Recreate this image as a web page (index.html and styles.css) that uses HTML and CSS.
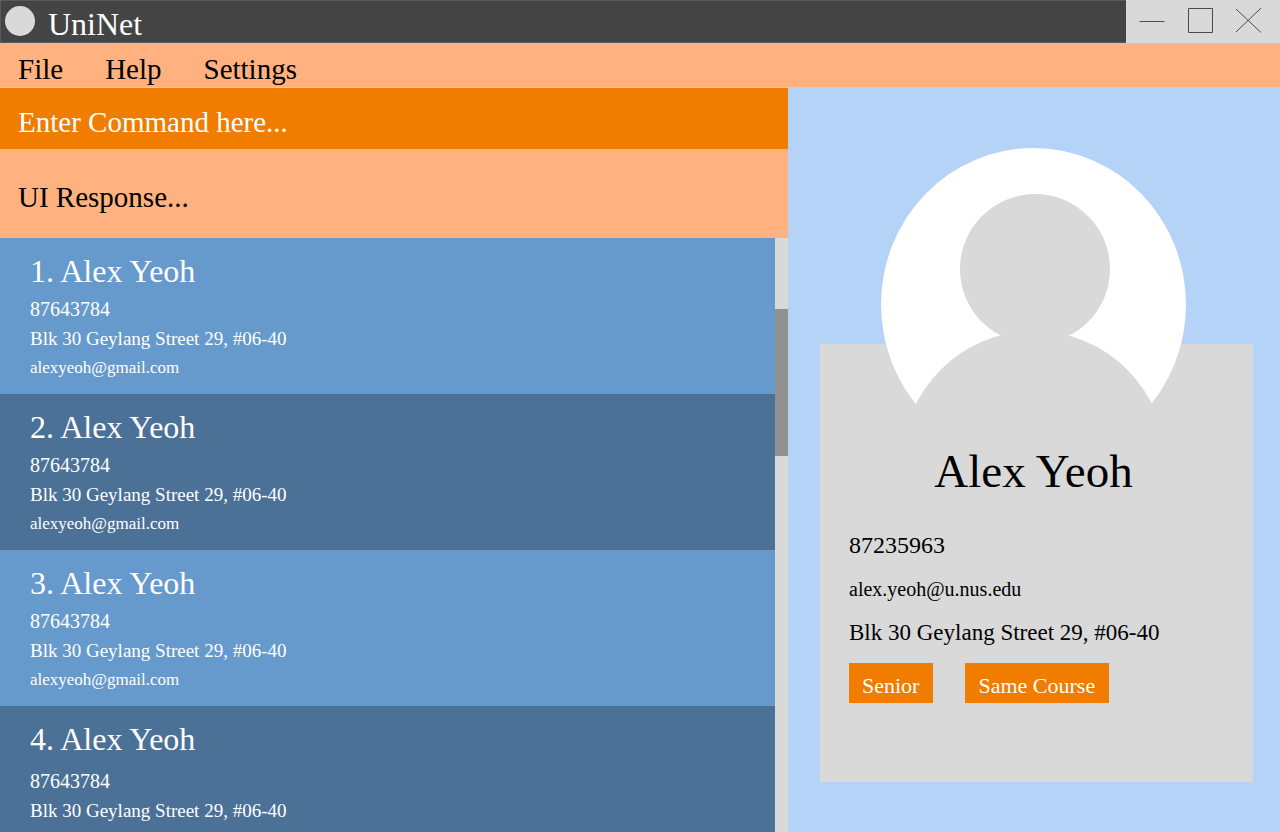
FILE: index.html
```
<!DOCTYPE html>
<html lang="en">
<head>
<meta charset="utf-8">
<meta name="viewport" content="width=device-width, initial-scale=1">
<title>UniNet</title>
<link rel="stylesheet" href="styles.css">
</head>
<body>
<div class="app">
  <header class="titlebar">
    <span class="logo"></span>
    <h1 class="app-name">UniNet</h1>
    <div class="window-controls">
      <button type="button" class="window-button" aria-label="Minimize">
        <svg width="28" height="28" viewBox="0 0 28 28"><path d="M1.500 14.500h25"/></svg>
      </button>
      <button type="button" class="window-button" aria-label="Maximize">
        <svg width="28" height="28" viewBox="0 0 28 28"><path d="M2.500 1.500h24v24h-24z"/></svg>
      </button>
      <button type="button" class="window-button" aria-label="Close">
        <svg width="28" height="28" viewBox="0 0 28 28"><path d="M2 2l25 23.500M27 1L2 25"/></svg>
      </button>
    </div>
  </header>

  <nav class="menubar">
    <button type="button" class="menu-item">File</button>
    <button type="button" class="menu-item">Help</button>
    <button type="button" class="menu-item">Settings</button>
  </nav>

  <main class="content">
    <section class="left">
      <input class="command" type="text" aria-label="Command" placeholder="Enter Command here...">
      <p class="response">UI Response...</p>
      <div class="list-area">
        <ul class="people">
          <li class="person">
            <h2 class="person-name">1. Alex Yeoh</h2>
            <p class="phone">87643784</p>
            <p class="address">Blk 30 Geylang Street 29, #06-40</p>
            <p class="email">alexyeoh@gmail.com</p>
          </li>
          <li class="person">
            <h2 class="person-name">2. Alex Yeoh</h2>
            <p class="phone">87643784</p>
            <p class="address">Blk 30 Geylang Street 29, #06-40</p>
            <p class="email">alexyeoh@gmail.com</p>
          </li>
          <li class="person">
            <h2 class="person-name">3. Alex Yeoh</h2>
            <p class="phone">87643784</p>
            <p class="address">Blk 30 Geylang Street 29, #06-40</p>
            <p class="email">alexyeoh@gmail.com</p>
          </li>
          <li class="person person-last">
            <h2 class="person-name">4. Alex Yeoh</h2>
            <p class="phone">87643784</p>
            <p class="address">Blk 30 Geylang Street 29, #06-40</p>
          </li>
        </ul>
        <div class="scrollbar"><div class="thumb"></div></div>
      </div>
    </section>

    <section class="profile">
      <svg class="avatar" width="305" height="313" viewBox="0 0 305 313" role="img" aria-label="Profile picture">
        <ellipse cx="152.500" cy="156.500" rx="152.500" ry="156.500" fill="#fff"/>
        <circle cx="154" cy="121" r="75" fill="#d9d9d9"/>
        <circle cx="153" cy="315" r="132" fill="#d9d9d9"/>
      </svg>
      <article class="card">
        <h2 class="card-name">Alex Yeoh</h2>
        <p class="card-phone">87235963</p>
        <p class="card-email">alex.yeoh@u.nus.edu</p>
        <p class="card-address">Blk 30 Geylang Street 29, #06-40</p>
        <div class="tags">
          <span class="tag">Senior</span>
          <span class="tag">Same Course</span>
        </div>
      </article>
    </section>
  </main>
</div>
</body>
</html>
```
FILE: styles.css
```
* {
  box-sizing: border-box;
  margin: 0;
  padding: 0;
}

body {
  font-family: "Liberation Serif", "Times New Roman", serif;
  color: #000;
}

h1, h2 {
  font-weight: 400;
}

button, input {
  font: inherit;
  color: inherit;
  border: 0;
  background: none;
}

.app {
  display: flex;
  flex-direction: column;
  height: 100vh;
  overflow: hidden;
}

.titlebar {
  display: flex;
  align-items: center;
  height: 43px;
  padding: 0 0 2px 4px;
  background: #444;
  border: 1px solid #5a5a5a;
  border-right: 0;
  color: #fff;
}

.logo {
  width: 30px;
  height: 30px;
  border-radius: 50%;
  background: #d9d9d9;
}

.app-name {
  margin-left: 13px;
  padding-top: 6px;
  font-size: 32px;
  line-height: 36px;
}

.window-controls {
  display: flex;
  align-items: center;
  gap: 20px;
  height: 43px;
  margin: 0 0 -2px auto;
  padding: 0 18px 2px 12px;
  background: #d9d9d9;
}

.window-button {
  display: flex;
}

.window-button svg {
  fill: none;
  stroke: #4a4a4a;
}

.menubar {
  display: flex;
  gap: 42px;
  height: 45px;
  padding: 7px 18px 0;
  background: #ffb280;
  border-bottom: 1px solid #ffc39c;
}

.menu-item {
  font-size: 29px;
  line-height: 38px;
}

.content {
  flex: 1;
  min-height: 0;
  display: grid;
  grid-template-columns: 788fr 492fr;
}

.left {
  display: flex;
  flex-direction: column;
  min-width: 0;
  min-height: 0;
}

.command {
  width: 100%;
  height: 61px;
  padding: 7px 18px 0;
  background: #f07c00;
  color: #fff;
  font-size: 29px;
}

.command::placeholder {
  color: #fff;
  opacity: 1;
}

.response {
  padding: 28px 18px 21px;
  background: #ffb280;
  font-size: 29px;
  line-height: 40px;
}

.list-area {
  flex: 1;
  min-height: 0;
  display: flex;
}

.people {
  flex: 1;
  overflow: hidden;
  list-style: none;
}

.person {
  height: 156px;
  padding: 14px 30px 0;
  background: #6699cc;
  color: #fff;
}

.person:nth-child(even) {
  background: #4b7197;
}

.person-name {
  margin-bottom: 5px;
  font-size: 32px;
  line-height: 38px;
}

.person-last .person-name {
  margin-bottom: 9px;
}

.phone, .address, .email {
  line-height: 29px;
}

.phone {
  font-size: 20px;
}

.address {
  font-size: 19px;
}

.email {
  font-size: 17px;
}

.scrollbar {
  display: grid;
  grid-template-rows: 71fr 147fr 376fr;
  width: 13px;
  background: #d9d9d9;
}

.thumb {
  grid-row: 2;
  background: #919191;
}

.profile {
  display: flex;
  flex-direction: column;
  align-items: center;
  padding: 60px 27px 50px 32px;
  background: #b4d3f6;
}

.avatar {
  position: relative;
  margin-right: 6px;
  flex-shrink: 0;
}

.card {
  flex: 1;
  width: 100%;
  margin-top: -117px;
  padding: 99px 29px 0;
  background: #d9d9d9;
}

.card-name {
  position: relative;
  margin-bottom: 24px;
  padding-right: 6px;
  font-size: 47px;
  line-height: 56px;
  text-align: center;
}

.card-phone, .card-email, .card-address {
  line-height: 44px;
}

.card-phone {
  font-size: 24px;
}

.card-email {
  font-size: 20px;
}

.card-address {
  font-size: 23px;
}

.tags {
  display: flex;
  gap: 32px;
  margin-top: 8px;
}

.tag {
  padding: 5px 14px 0 13px;
  height: 40px;
  background: #f07c00;
  color: #fff;
  font-size: 22px;
  line-height: 35px;
}
```
